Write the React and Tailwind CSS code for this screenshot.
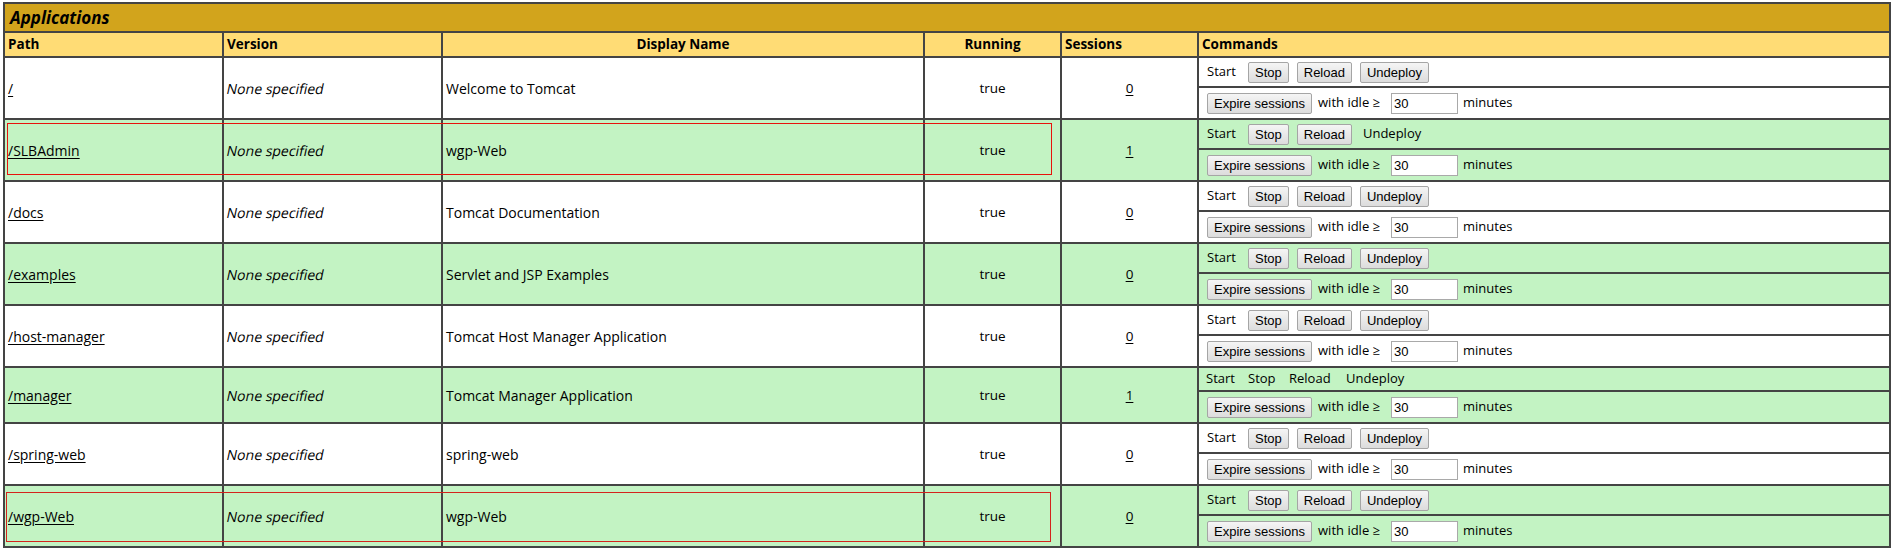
import React from 'react';

const apps = [
  { path: '/', name: 'Welcome to Tomcat', sessions: '0', green: false, mode: 'all' },
  { path: '/SLBAdmin', name: 'wgp-Web', sessions: '1', green: true, mode: 'noUndeploy' },
  { path: '/docs', name: 'Tomcat Documentation', sessions: '0', green: false, mode: 'all' },
  { path: '/examples', name: 'Servlet and JSP Examples', sessions: '0', green: true, mode: 'all' },
  { path: '/host-manager', name: 'Tomcat Host Manager Application', sessions: '0', green: false, mode: 'all' },
  { path: '/manager', name: 'Tomcat Manager Application', sessions: '1', green: true, mode: 'text' },
  { path: '/spring-web', name: 'spring-web', sessions: '0', green: false, mode: 'all' },
  { path: '/wgp-Web', name: 'wgp-Web', sessions: '0', green: true, mode: 'all' },
];

function Btn({ children, className = '' }) {
  return (
    <button className={"flex h-[21px] items-center rounded-[2px] border border-[#a5a5a5] bg-linear-to-b from-[#f5f5f5] to-[#dcdcdc] px-[6px] font-['Liberation_Sans',Arial,sans-serif] text-[13px] leading-none text-black " + className}>
      {children}
    </button>
  );
}

function Commands({ mode }) {
  return (
    <div className="flex flex-col border border-[#444] text-[13px]">
      {mode === 'text' ? (
        <div className="flex h-[22px] items-center pl-[7px]">
          <span className="w-[42px]">Start</span>
          <span className="w-[41px]">Stop</span>
          <span className="w-[57px]">Reload</span>
          <span>Undeploy</span>
        </div>
      ) : (
        <div className="flex h-[28px] items-center pl-[8px]">
          <span className="w-[41px]">Start</span>
          <Btn>Stop</Btn>
          <Btn className="ml-[8px]">Reload</Btn>
          {mode === 'noUndeploy' ? (
            <span className="ml-[11px]">Undeploy</span>
          ) : (
            <Btn className="ml-[8px]">Undeploy</Btn>
          )}
        </div>
      )}
      <div className="h-[2px] bg-[#444]" />
      <div className="flex h-[30px] items-center pl-[8px]">
        <Btn>Expire sessions</Btn>
        <span className="w-[79px] pl-[6px]">with idle ≥</span>
        <input
          readOnly
          value="30"
          className="h-[21px] w-[67px] border border-[#a9a9a9] bg-white px-[2px] font-['Liberation_Sans',Arial,sans-serif] text-[13px] text-black outline-none"
        />
        <span className="ml-[5px]">minutes</span>
      </div>
    </div>
  );
}

export default function App() {
  return (
    <div className="relative min-h-[553px] bg-white px-[3px] pt-[2px] font-['Open_Sans',sans-serif] text-[14px] text-black">
      <div className="border border-[#444]">
        <div className="grid grid-cols-[219px_219px_482px_137px_137px_1fr]">
          <div className="col-span-6 flex h-[29px] items-center border border-[#444] bg-[#D2A41C] pl-[5px] text-[17px] font-bold italic">
            Applications
          </div>

          <div className="flex h-[25px] items-center border border-[#444] bg-[#FFDC75] px-[3px] text-[13.5px] font-bold">Path</div>
          <div className="flex h-[25px] items-center border border-[#444] bg-[#FFDC75] px-[3px] text-[13.5px] font-bold">Version</div>
          <div className="flex h-[25px] items-center justify-center border border-[#444] bg-[#FFDC75] px-[3px] text-[13.5px] font-bold">Display Name</div>
          <div className="flex h-[25px] items-center justify-center border border-[#444] bg-[#FFDC75] px-[3px] text-[13.5px] font-bold">Running</div>
          <div className="flex h-[25px] items-center border border-[#444] bg-[#FFDC75] px-[3px] text-[13.5px] font-bold">Sessions</div>
          <div className="flex h-[25px] items-center border border-[#444] bg-[#FFDC75] px-[3px] text-[13.5px] font-bold">Commands</div>

          {apps.map((app) => (
            <div key={app.path} className={app.green ? 'contents [&>div]:bg-[#C3F3C3]' : 'contents [&>div]:bg-white'}>
              <div className="flex items-center border border-[#444] px-[3px]">
                <a className="underline underline-offset-2">{app.path}</a>
              </div>
              <div className="flex items-center border border-[#444] px-[3px]">
                <span className="inline-block -skew-x-12">None specified</span>
              </div>
              <div className="flex items-center border border-[#444] px-[3px]">{app.name}</div>
              <div className="flex items-center justify-center border border-[#444] px-[3px] text-[13.5px]">true</div>
              <div className="flex items-center justify-center border border-[#444] px-[3px] text-[13.5px]">
                <a className="underline underline-offset-2">{app.sessions}</a>
              </div>
              <Commands mode={app.mode} />
            </div>
          ))}
        </div>
      </div>

      <div className="pointer-events-none absolute left-[7px] top-[123px] h-[52px] w-[1045px] border border-[#e8120c]" />
      <div className="pointer-events-none absolute left-[6px] top-[492px] h-[50px] w-[1045px] border border-[#d4231c]" />
    </div>
  );
}
